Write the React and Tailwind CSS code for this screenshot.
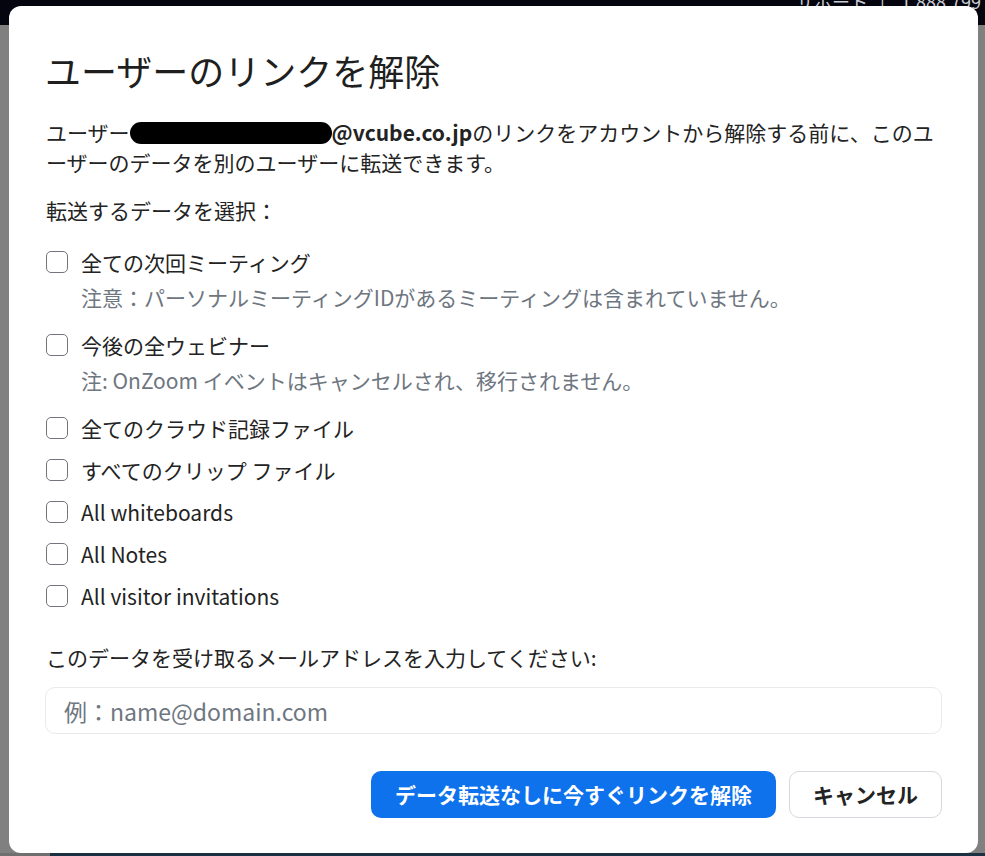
import React from "react";

const font = { fontFamily: '"Noto Sans CJK JP", "Noto Sans", sans-serif' };

function Box() {
  return (
    <span className="inline-block w-[22px] h-[22px] shrink-0 rounded-[5px] border-[1.5px] border-[#72767c] bg-white" />
  );
}

function Item({ label, note, className = "" }) {
  return (
    <div className={className}>
      <div className="flex items-center gap-[13px] h-[30px]">
        <Box />
        <span className="text-[21px] leading-[30px] text-[#232323]">{label}</span>
      </div>
      {note && (
        <div className="pl-[35px] mt-[5px] text-[21px] leading-[30px] text-[#6e7680]">{note}</div>
      )}
    </div>
  );
}

export default function App() {
  return (
    <div className="relative w-[985px] h-[856px] overflow-hidden bg-[#808080]" style={font}>
      <div className="h-[25px] bg-[#04050f] flex justify-end items-start pr-[4px] overflow-hidden">
        <span className="text-[18px] leading-[14px] -mt-[6px] text-[#c9ccd2] whitespace-nowrap">サポート&nbsp;&nbsp;&nbsp;|&nbsp;&nbsp;&nbsp;&nbsp;1.888.799</span>
      </div>
      <div className="absolute left-0 right-0 bottom-0 h-[3px] bg-[#1b3041]" />
      <div className="absolute left-0 bottom-0 w-[50px] h-[3px] bg-[#6f6f6f]" />
      <div className="absolute left-[9px] top-[6px] w-[969px] h-[847px] bg-white rounded-[12px] px-[36px] pt-[42px]">
        <h1 className="text-[36px] leading-[44px] font-normal text-[#1f1f1f]">ユーザーのリンクを解除</h1>
        <p className="mt-[25px] text-[21px] leading-[30px] text-[#232323] pl-[1px] whitespace-nowrap">
          ユーザー
          <span className="inline-block align-middle w-[202px] h-[22px] -mt-[4px] rounded-full bg-black" />
          <span className="font-bold">@vcube.co.jp</span>
          のリンクをアカウントから解除する前に、このユ
          <br />
          ーザーのデータを別のユーザーに転送できます。
        </p>
        <p className="mt-[18px] text-[21px] leading-[30px] text-[#232323] pl-[1px]">転送するデータを選択：</p>
        <div className="pl-[1px]">
          <Item className="mt-[22px]" label="全ての次回ミーティング" note="注意：パーソナルミーティングIDがあるミーティングは含まれていません。" />
          <Item className="mt-[18px]" label="今後の全ウェビナー" note="注: OnZoom イベントはキャンセルされ、移行されません。" />
          <Item className="mt-[18px]" label="全てのクラウド記録ファイル" />
          <Item className="mt-[12px]" label="すべてのクリップ ファイル" />
          <Item className="mt-[12px]" label="All whiteboards" />
          <Item className="mt-[12px]" label="All Notes" />
          <Item className="mt-[12px]" label="All visitor invitations" />
        </div>
        <p className="mt-[31px] text-[21px] leading-[30px] text-[#232323] pl-[1px]">このデータを受け取るメールアドレスを入力してください:</p>
        <input
          type="text"
          placeholder="例：name@domain.com"
          className="mt-[15px] block w-[897px] h-[47px] rounded-[10px] border border-[#e8eaee] px-[18px] text-[23px] text-[#232323] placeholder:text-[#6e7680] outline-none"
          style={font}
        />
        <div className="mt-[37px] flex justify-end gap-[13px]">
          <button className="h-[47px] px-[24px] rounded-[10px] bg-[#0e72ed] text-white text-[21px] font-bold" style={font}>
            データ転送なしに今すぐリンクを解除
          </button>
          <button className="h-[47px] w-[153px] rounded-[10px] border border-[#d6d8dd] bg-white text-[#232323] text-[21px] font-bold" style={font}>
            キャンセル
          </button>
        </div>
      </div>
    </div>
  );
}
